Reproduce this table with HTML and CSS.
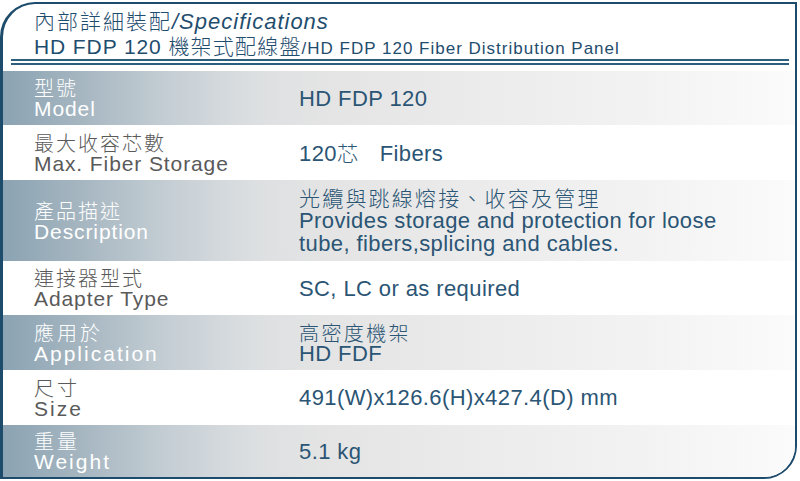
FILE: index.html
```html
<!DOCTYPE html>
<html lang="zh-Hant">
<head>
<meta charset="utf-8">
<title>Specifications</title>
<link rel="stylesheet" href="styles.css">
</head>
<body>
<div class="frame">
  <header class="head">
    <h1 class="t1"><span class="zh">內部詳細裝配</span><i>/Specifications</i></h1>
    <h2 class="t2"><span class="main">HD FDP 120 </span><span class="zh">機架式配線盤</span><span class="sub">/HD FDP 120 Fiber Distribution Panel</span></h2>
    <div class="rule"></div>
  </header>
  <div class="rows">
    <div class="row shade h54">
      <div class="label"><div class="zh">型號</div><div class="en">Model</div></div>
      <div class="value">HD FDP 120</div>
    </div>
    <div class="row h55">
      <div class="label"><div class="zh">最大收容芯數</div><div class="en">Max. Fiber Storage</div></div>
      <div class="value">120<span class="zh">芯</span>&nbsp;&nbsp; Fibers</div>
    </div>
    <div class="row shade h81">
      <div class="label"><div class="zh">產品描述</div><div class="en">Description</div></div>
      <div class="value multi"><div class="zh">光纜與跳線熔接、收容及管理</div><div>Provides storage and protection for loose</div><div>tube, fibers,splicing and cables.</div></div>
    </div>
    <div class="row h54">
      <div class="label"><div class="zh">連接器型式</div><div class="en">Adapter Type</div></div>
      <div class="value">SC, LC or as required</div>
    </div>
    <div class="row shade h55">
      <div class="label wide"><div class="zh">應用於</div><div class="en">Application</div></div>
      <div class="value tight"><div class="zh">高密度機架</div><div>HD FDF</div></div>
    </div>
    <div class="row h55">
      <div class="label wide"><div class="zh">尺寸</div><div class="en">Size</div></div>
      <div class="value">491(W)x126.6(H)x427.4(D) mm</div>
    </div>
    <div class="row shade last">
      <div class="label wide"><div class="zh">重量</div><div class="en">Weight</div></div>
      <div class="value">5.1 kg</div>
    </div>
  </div>
</div>
</body>
</html>
```

FILE: styles.css
```css
html, body {
  margin: 0;
  padding: 0;
  background: #ffffff;
}
body {
  font-family: "Liberation Sans", Arial, "Noto Sans CJK TC", sans-serif;
  padding-top: 2px;
}
.frame {
  box-sizing: border-box;
  width: 797px;
  height: 477px;
  border: 2px solid #1d4b6c;
  border-left-width: 3px;
  border-radius: 35px 0 33px 0;
  overflow: hidden;
  display: flex;
  flex-direction: column;
  background: #ffffff;
}
.head {
  padding: 3px 0 0 31px;
  color: #1f4d6e;
}
.t1 {
  margin: 0;
  height: 26px;
  overflow: visible;
  font-weight: normal;
  font-size: 21px;
  line-height: 26px;
  white-space: nowrap;
}
.t1 .zh {
  font-family: "Noto Sans CJK TC", sans-serif;
  font-weight: 300;
  letter-spacing: 2px;
  line-height: 26px;
}
.t1 i {
  font-size: 22px;
  letter-spacing: 1px;
  line-height: 26px;
}
.t2 {
  margin: 0;
  height: 25px;
  font-weight: normal;
  font-size: 21px;
  line-height: 25px;
  white-space: nowrap;
}
.t2 .main {
  letter-spacing: 0.9px;
  line-height: 25px;
}
.t2 .zh {
  font-family: "Noto Sans CJK TC", sans-serif;
  font-weight: 300;
  letter-spacing: 1.2px;
  line-height: 25px;
}
.t2 .sub {
  font-size: 17px;
  letter-spacing: 1px;
  line-height: 25px;
}
.rule {
  margin: 1px 6px 0 -23px;
  height: 2px;
  border-top: 2px solid #2c5e7e;
  border-bottom: 2px solid #2c5e7e;
}
.rows {
  margin-top: 6px;
  display: flex;
  flex-direction: column;
  flex: 1;
}
.row {
  display: grid;
  grid-template-columns: 296px 1fr;
  align-items: center;
  background: #ffffff;
}
.row.shade {
  background: linear-gradient(to right, #8ba3b3 0px, #a3b4bf 70px, #c6cfd5 170px, #dcdfe1 250px, #e4e4e4 320px, #eaeaea 450px, #f3f3f3 650px, #fbfbfb 794px);
}
.h54 { height: 54px; }
.h55 { height: 55px; }
.h81 { height: 81px; }
.last { flex: 1; }
.label {
  padding-left: 31px;
  color: #5a5a5a;
  font-size: 21px;
  line-height: 21px;
}
.shade .label {
  color: #ffffff;
}
.label .zh {
  font-family: "Noto Sans CJK TC", sans-serif;
  font-weight: 300;
  font-size: 20px;
  letter-spacing: 2px;
  line-height: 21px;
}
.label .en {
  letter-spacing: 0.9px;
  line-height: 21px;
}
.label.wide .zh {
  letter-spacing: 3px;
}
.label.wide .en {
  letter-spacing: 2px;
}
.value {
  color: #2b5574;
  font-size: 22px;
  line-height: 23px;
  letter-spacing: 0.4px;
}
.value .zh {
  font-family: "Noto Sans CJK TC", sans-serif;
  font-weight: 300;
  font-size: 21px;
  letter-spacing: 2.2px;
}
.value.tight {
  line-height: 21px;
}
.value.tight .zh {
  font-size: 20px;
  letter-spacing: 2.4px;
}
```
